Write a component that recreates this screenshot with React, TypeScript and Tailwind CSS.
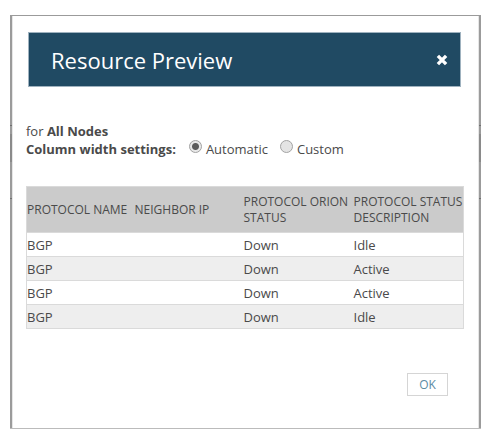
import { useState } from "react";

const rows = [
  { protocol: "BGP", neighbor: "", orion: "Down", status: "Idle" },
  { protocol: "BGP", neighbor: "", orion: "Down", status: "Active" },
  { protocol: "BGP", neighbor: "", orion: "Down", status: "Active" },
  { protocol: "BGP", neighbor: "", orion: "Down", status: "Idle" },
];

const radioClass =
  "h-[13px] w-[13px] shrink-0 -translate-y-[3px] appearance-none rounded-full border border-[#a3a3a3] bg-[#e4e4e4] checked:bg-[radial-gradient(circle,#5c5c5c_0_3px,#e9e9e9_4px)]";

function Option({ label, checked, onChange }: { label: string; checked: boolean; onChange: () => void }) {
  return (
    <label className="flex items-center gap-1">
      <input type="radio" name="column-width" className={radioClass} checked={checked} onChange={onChange} />
      {label}
    </label>
  );
}

export default function App() {
  const [width, setWidth] = useState("automatic");
  return (
    <main className="bg-white pt-[15px] pr-2 pb-2 pl-[10px] font-['Open_Sans',sans-serif] text-[13px] leading-[18px] text-[#4a4a4a]">
      {/* Frame: the page behind shows faintly through the side borders */}
      <div className="border-t border-b border-t-[#9b9b9b] border-b-[#bbbbbb] bg-[linear-gradient(#9b9b9b_109px,#707070_109px_110px,#9b9b9b_110px_118px,#8a8a8a_118px_146px,#9b9b9b_146px_182px,#707070_182px_183px,#9b9b9b_183px)] px-[2px]">
        <section className="border-x border-[#e6e6e6] bg-white pt-4 pb-8" aria-labelledby="title">
          <header className="mr-[17px] ml-[15px] flex h-[55px] items-center justify-between border border-[#9fb2bf] bg-[#204a63] pr-3 pl-[22px] text-white">
            <h1 id="title" className="text-[22px] leading-7">Resource Preview</h1>
            <button type="button" aria-label="Close" className="p-0">
              <svg width="12" height="12" viewBox="0 0 12 12" fill="none" stroke="currentColor" strokeWidth="3.4">
                <path d="M1.9 1.9 10.1 10.1M10.1 1.9 1.9 10.1" />
              </svg>
            </button>
          </header>

          <div className="mr-[14px] ml-[13px] pt-[35px]">
            <p>
              for <b>All Nodes</b>
            </p>
            <div className="flex items-center" role="radiogroup" aria-label="Column width settings">
              <b className="mr-[13px]">Column width settings:</b>
              <div className="flex gap-3">
                <Option label="Automatic" checked={width === "automatic"} onChange={() => setWidth("automatic")} />
                <Option label="Custom" checked={width === "custom"} onChange={() => setWidth("custom")} />
              </div>
            </div>

            <table className="mt-7 w-full table-fixed border-collapse border border-[#dadada] text-left">
              <colgroup>
                <col className="w-[108px]" />
                <col className="w-[109px]" />
                <col className="w-[110px]" />
                <col />
              </colgroup>
              <thead>
                <tr className="h-[46px] bg-[#cbcbcb] text-xs leading-4 whitespace-nowrap">
                  <th className="p-0 font-normal">PROTOCOL NAME</th>
                  <th className="p-0 font-normal">NEIGHBOR IP</th>
                  <th className="p-0 font-normal">
                    PROTOCOL ORION
                    <br />
                    STATUS
                  </th>
                  <th className="p-0 font-normal">
                    PROTOCOL STATUS
                    <br />
                    DESCRIPTION
                  </th>
                </tr>
              </thead>
              <tbody>
                {rows.map((row, i) => (
                  <tr key={i} className="h-6 border-t border-[#dadada] even:bg-[#eeeeee]">
                    <td className="p-0">{row.protocol}</td>
                    <td className="p-0">{row.neighbor}</td>
                    <td className="p-0">{row.orion}</td>
                    <td className="p-0">{row.status}</td>
                  </tr>
                ))}
              </tbody>
            </table>

            <div className="mt-11 mr-4 flex justify-end">
              <button type="button" className="h-[23px] w-[41px] border border-[#d5d5d5] bg-white text-xs text-[#5b8ba3]">
                OK
              </button>
            </div>
          </div>
        </section>
      </div>
    </main>
  );
}
